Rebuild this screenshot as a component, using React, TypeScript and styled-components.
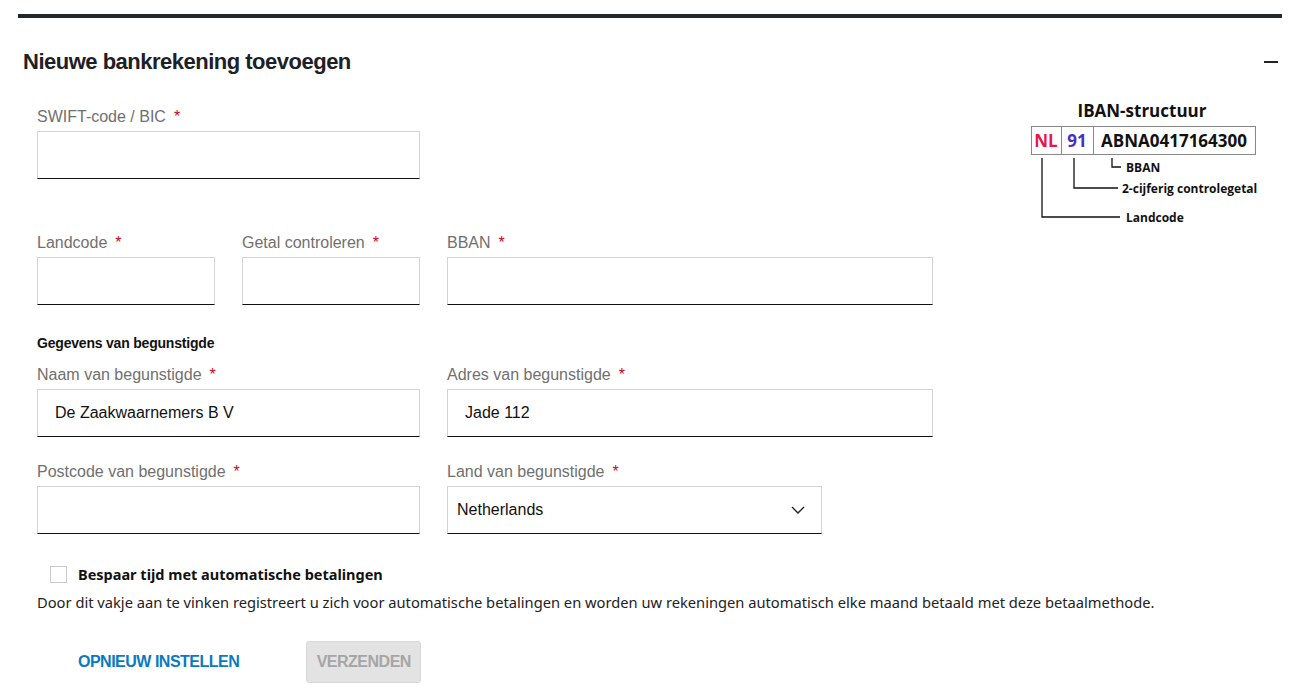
import styled, { createGlobalStyle } from 'styled-components'

const Global = createGlobalStyle`
  body { margin: 0; background: #fff; font-family: "Liberation Sans", Arial, sans-serif; }
`

const Page = styled.div`
  padding: 14px 18px 0 18px;
`

const TopBar = styled.div`
  height: 4px;
  background: #23262a;
`

const Header = styled.div`
  display: flex;
  align-items: center;
  justify-content: space-between;
  padding: 29px 2px 0 5px;
  height: 30px;
`

const Title = styled.h2`
  margin: 0;
  font-size: 22px;
  font-weight: 700;
  letter-spacing: -0.5px;
  color: #1d2024;
`

const Minus = styled.div`
  width: 14px;
  height: 2px;
  background: #222;
  margin-right: 2px;
`

const Form = styled.div`
  padding: 0 0 0 19px;
`

const Row = styled.div<{ $mt: number }>`
  display: flex;
  align-items: flex-start;
  gap: 27px;
  margin-top: ${({ $mt }) => $mt}px;
`

const Field = styled.div<{ $w: number }>`
  display: flex;
  flex-direction: column;
  width: ${({ $w }) => $w}px;
`

const Label = styled.label`
  font-size: 16px;
  color: #707070;
  height: 20px;
  line-height: 20px;
  margin-bottom: 4px;
  span { color: #d0021b; margin-left: 8px; }
`

const Input = styled.div`
  box-sizing: border-box;
  height: 48px;
  border: 1px solid #d4d4d4;
  border-bottom: 1px solid #111;
  display: flex;
  align-items: center;
  justify-content: space-between;
  padding: 0 17px;
  font-size: 16px;
  color: #111;
`

const Select = styled(Input)`
  padding: 0 16px 0 9px;
`

const SectionTitle = styled.div`
  margin-top: 30px;
  font-size: 14px;
  font-weight: 700;
  letter-spacing: -0.2px;
  color: #111;
`

const CheckRow = styled.div`
  display: flex;
  align-items: center;
  gap: 11px;
  margin: 30px 0 0 13px;
  font-family: "Noto Sans", sans-serif;
  font-size: 14.5px;
  font-weight: 700;
  color: #111;
`

const Box = styled.div`
  width: 15px;
  height: 15px;
  border: 1px solid #ccc;
`

const Desc = styled.div`
  margin-top: 8px;
  font-family: "Noto Sans", sans-serif;
  font-size: 14.7px;
  color: #222;
`

const Buttons = styled.div`
  display: flex;
  align-items: center;
  gap: 67px;
  margin: 29px 0 0 41px;
`

const LinkBtn = styled.div`
  font-size: 16px;
  font-weight: 700;
  letter-spacing: -0.5px;
  color: #0a7ac0;
`

const Disabled = styled.div`
  width: 115px;
  height: 42px;
  box-sizing: border-box;
  border-radius: 3px;
  background: #e3e3e3;
  border: 1px solid #d8d8d8;
  color: #a6a6a6;
  font-size: 16px;
  font-weight: 700;
  letter-spacing: -0.5px;
  display: flex;
  align-items: center;
  justify-content: center;
`

const Graphic = styled.div`
  margin-left: auto;
  margin-right: 20px;
  margin-top: -8px;
  margin-bottom: -80px;
`

const Req = () => <span>*</span>

const Iban = () => (
  <Graphic>
    <svg width="236" height="130" viewBox="0 0 236 130" fontFamily="'Open Sans', sans-serif" fontWeight="700">
      <text x="116" y="18" textAnchor="middle" fontSize="17" fill="#111">IBAN-structuur</text>
      <rect x="5.5" y="27.5" width="224" height="28" fill="#fff" stroke="#888" />
      <line x1="35.5" y1="27" x2="35.5" y2="56" stroke="#888" />
      <line x1="67.5" y1="27" x2="67.5" y2="56" stroke="#888" />
      <text x="20" y="48" textAnchor="middle" fontSize="17" fill="#e8174f">NL</text>
      <text x="51" y="48" textAnchor="middle" fontSize="17" fill="#4a2fc4">91</text>
      <text x="148" y="48" textAnchor="middle" fontSize="17" fill="#111">ABNA0417164300</text>
      <g stroke="#111" strokeWidth="1.3" fill="none">
        <polyline points="86,59 86,68 95,68" />
        <polyline points="48,59 48,89 92,89" />
        <polyline points="16,59 16,118 94,118" />
      </g>
      <text x="100" y="73" fontSize="12" fill="#111">BBAN</text>
      <text x="96" y="94" fontSize="12" fill="#111">2-cijferig controlegetal</text>
      <text x="100" y="123" fontSize="12" fill="#111">Landcode</text>
    </svg>
  </Graphic>
)

const Chevron = () => (
  <svg width="14" height="8" viewBox="0 0 14 8" fill="none" stroke="#222" strokeWidth="1.4">
    <polyline points="1,1 7,7 13,1" />
  </svg>
)

export default function App() {
  return (
    <Page>
      <Global />
      <TopBar />
      <Header>
        <Title>Nieuwe bankrekening toevoegen</Title>
        <Minus />
      </Header>
      <Form>
        <Row $mt={30}>
          <Field $w={383}>
            <Label>SWIFT-code / BIC<Req /></Label>
            <Input />
          </Field>
          <Iban />
        </Row>
        <Row $mt={54}>
          <Field $w={178}>
            <Label>Landcode<Req /></Label>
            <Input />
          </Field>
          <Field $w={178}>
            <Label>Getal controleren<Req /></Label>
            <Input />
          </Field>
          <Field $w={486}>
            <Label>BBAN<Req /></Label>
            <Input />
          </Field>
        </Row>
        <SectionTitle>Gegevens van begunstigde</SectionTitle>
        <Row $mt={14}>
          <Field $w={383}>
            <Label>Naam van begunstigde<Req /></Label>
            <Input>De Zaakwaarnemers B V</Input>
          </Field>
          <Field $w={486}>
            <Label>Adres van begunstigde<Req /></Label>
            <Input>Jade 112</Input>
          </Field>
        </Row>
        <Row $mt={25}>
          <Field $w={383}>
            <Label>Postcode van begunstigde<Req /></Label>
            <Input />
          </Field>
          <Field $w={375}>
            <Label>Land van begunstigde<Req /></Label>
            <Select>Netherlands<Chevron /></Select>
          </Field>
        </Row>
        <CheckRow><Box />Bespaar tijd met automatische betalingen</CheckRow>
        <Desc>Door dit vakje aan te vinken registreert u zich voor automatische betalingen en worden uw rekeningen automatisch elke maand betaald met deze betaalmethode.</Desc>
        <Buttons>
          <LinkBtn>OPNIEUW INSTELLEN</LinkBtn>
          <Disabled>VERZENDEN</Disabled>
        </Buttons>
      </Form>
    </Page>
  )
}
